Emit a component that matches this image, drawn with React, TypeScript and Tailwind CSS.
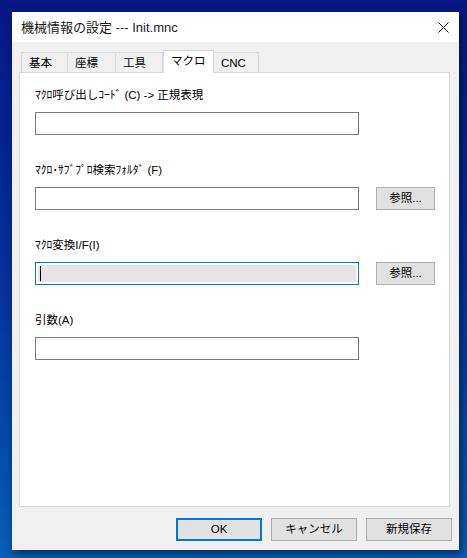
import React from "react";

const font = { fontFamily: '"Liberation Sans", "Noto Sans CJK JP", sans-serif' };

const tabs = [
  { label: "基本", w: "w-[47px]" },
  { label: "座標", w: "w-[48px]" },
  { label: "工具", w: "w-[47px]" },
  { label: "マクロ", w: "w-[51px]", active: true },
  { label: "CNC", w: "w-[45px]" },
];

function Field({ label, browse, focused }: { label: string; browse?: boolean; focused?: boolean }) {
  return (
    <div className="flex flex-col">
      <div className="h-[16px] text-[11.5px] leading-[16px] text-black whitespace-nowrap">{label}</div>
      <div className="mt-[9px] flex items-center">
        {focused ? (
          <div className="h-[23px] w-[324px] border border-[#0078d7] bg-white p-[2px]">
            <div className="h-full w-full bg-[#e5e5e5] flex items-center pl-[2px]">
              <div className="h-[15px] w-px bg-black" />
            </div>
          </div>
        ) : (
          <div className="h-[23px] w-[324px] border border-[#7a7a7a] bg-white" />
        )}
        {browse && (
          <button className="ml-[17px] h-[23px] w-[59px] border border-[#adadad] bg-[#e1e1e1] text-[11.5px] leading-none text-black">
            参照...
          </button>
        )}
      </div>
    </div>
  );
}

export default function App() {
  return (
    <div
      className="h-[558px] w-[467px] overflow-hidden bg-gradient-to-b from-[#071785] via-[#06309c] to-[#0a5db4] pl-[12px] pt-[12px]"
      style={font}
    >
      <div className="flex h-[538px] w-[447px] flex-col bg-[#f0f0f0] shadow-[2px_3px_8px_rgba(0,0,0,0.55)]">
        {/* title bar */}
        <div className="flex h-[30px] items-center bg-white pl-[9px] pr-[10px]">
          <span className="text-[13px] leading-none text-[#1a1a1a]">機械情報の設定 --- Init.mnc</span>
          <svg className="ml-auto" width="11" height="11" viewBox="0 0 11 11">
            <path d="M0.5 0.5 L10.5 10.5 M10.5 0.5 L0.5 10.5" stroke="#111" strokeWidth="1" />
          </svg>
        </div>

        <div className="flex flex-1 flex-col px-[7px] pt-[8px]">
          {/* tabs */}
          <div className="flex h-[22px] items-end pl-[2px]">
            {tabs.map((t, i) =>
              t.active ? (
                <div
                  key={t.label}
                  className={`${t.w} relative z-10 -mb-px h-[23px] border border-b-0 border-[#d9d9d9] bg-white pl-[7px] pt-[2px] text-[11.5px] leading-[16px] text-black`}
                >
                  {t.label}
                </div>
              ) : (
                <div
                  key={t.label}
                  className={`${t.w} h-[20px] border-t border-[#d9d9d9] ${i === 0 ? "border-l" : ""} ${
                    i !== 3 ? "border-r" : ""
                  } bg-[#f0f0f0] pl-[7px] pt-[2px] text-[11.5px] leading-[16px] text-black`}
                >
                  {t.label}
                </div>
              )
            )}
          </div>

          {/* panel */}
          <div className="flex h-[435px] w-[431px] flex-col gap-[27px] border border-[#d9d9d9] bg-white pl-[15px] pt-[14px]">
            <Field label="ﾏｸﾛ呼び出しｺｰﾄﾞ (C) -> 正規表現" />
            <Field label="ﾏｸﾛ･ｻﾌﾞﾌﾟﾛ検索ﾌｫﾙﾀﾞ (F)" browse />
            <Field label="ﾏｸﾛ変換I/F(I)" browse focused />
            <Field label="引数(A)" />
          </div>

          {/* buttons */}
          <div className="mt-[11px] flex justify-end gap-[9px]">
            <button className="h-[23px] w-[86px] border-2 border-[#0078d7] bg-[#e1e1e1] text-[11.5px] leading-none text-black">
              OK
            </button>
            <button className="h-[23px] w-[86px] border border-[#adadad] bg-[#e1e1e1] text-[11.5px] leading-none text-black">
              キャンセル
            </button>
            <button className="h-[23px] w-[86px] border border-[#adadad] bg-[#e1e1e1] text-[11.5px] leading-none text-black">
              新規保存
            </button>
          </div>
        </div>
      </div>
    </div>
  );
}
